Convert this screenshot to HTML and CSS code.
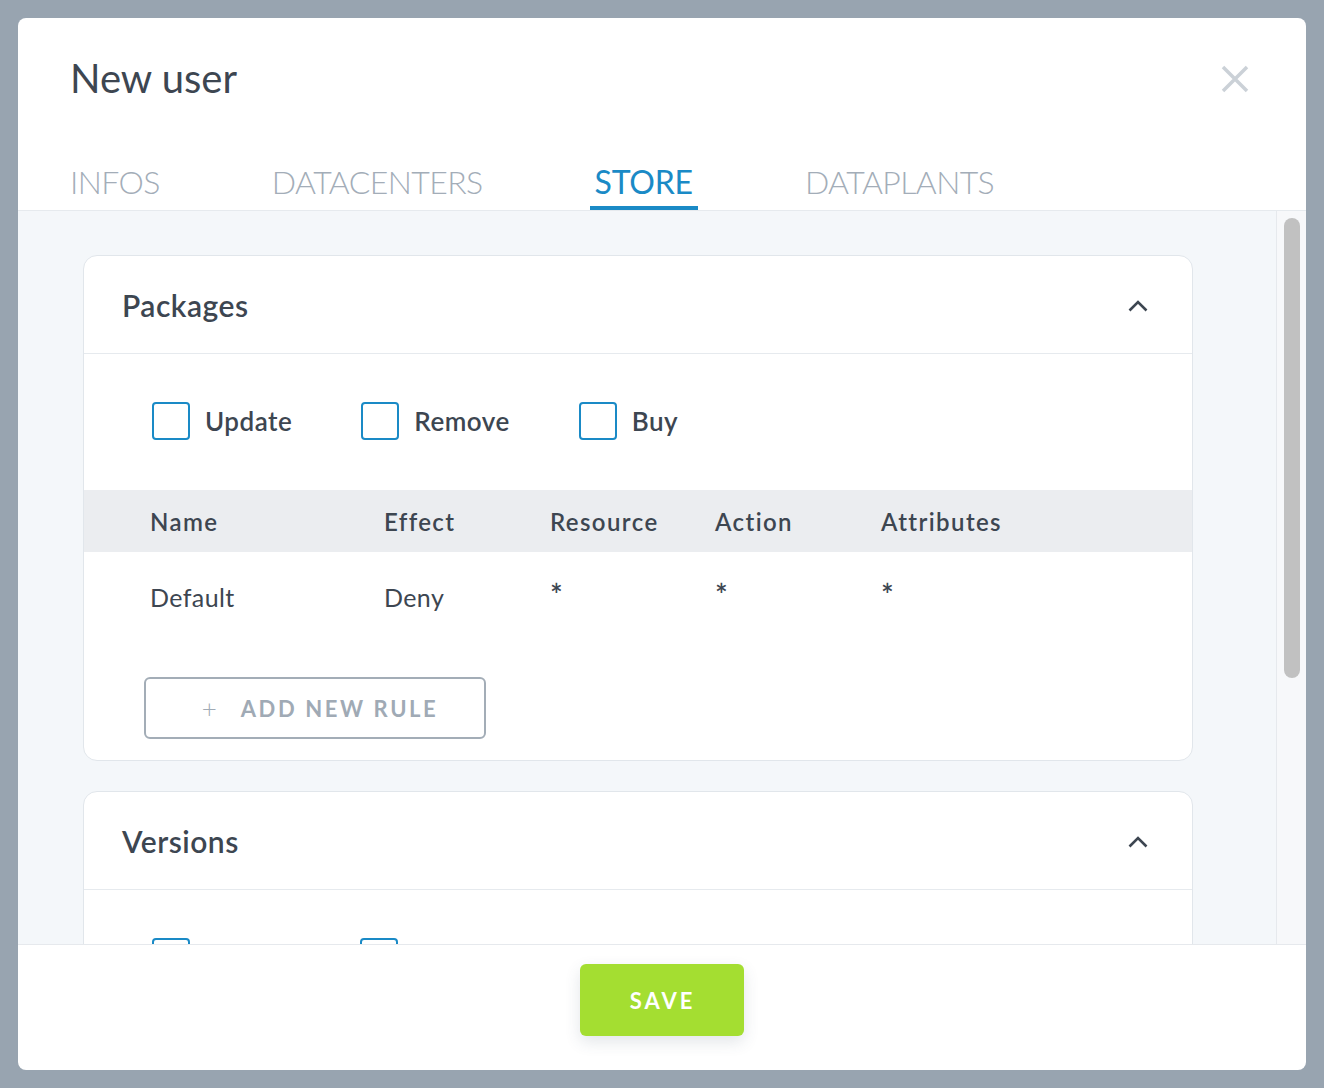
FILE: index.html
```html
<!DOCTYPE html>
<html lang="en">
<head>
<meta charset="utf-8">
<title>New user</title>
<link rel="stylesheet" href="styles.css">
</head>
<body>
<div class="overlay">
  <div class="modal">
    <div class="head">
      <div class="title-row">
        <h1 class="title">New user</h1>
        <button class="close" aria-label="Close">
          <svg width="28" height="28" viewBox="0 0 28 28"><path d="M2 2 L26 26 M26 2 L2 26" stroke="#cbd1d7" stroke-width="3.5" fill="none"/></svg>
        </button>
      </div>
      <nav class="tabs">
        <div class="tab">INFOS</div>
        <div class="tab">DATACENTERS</div>
        <div class="tab active">STORE</div>
        <div class="tab">DATAPLANTS</div>
      </nav>
    </div>
    <div class="body">
      <div class="scroll-area">
        <section class="card">
          <div class="card-head">
            <h2 class="card-title">Packages</h2>
            <svg class="chev" width="20" height="12" viewBox="0 0 20 12"><path d="M1.5 10.5 L10 2 L18.5 10.5" stroke="#3d4651" stroke-width="2.6" fill="none"/></svg>
          </div>
          <div class="checks">
            <label class="check"><span class="box"></span><span class="check-label">Update</span></label>
            <label class="check"><span class="box"></span><span class="check-label">Remove</span></label>
            <label class="check"><span class="box"></span><span class="check-label">Buy</span></label>
          </div>
          <div class="table">
            <div class="tr th">
              <div>Name</div><div>Effect</div><div>Resource</div><div>Action</div><div>Attributes</div>
            </div>
            <div class="tr td">
              <div>Default</div><div>Deny</div><div class="ast">*</div><div class="ast">*</div><div class="ast">*</div>
            </div>
          </div>
          <div class="add-wrap">
            <button class="add"><span class="plus">+</span><span>ADD NEW RULE</span></button>
          </div>
        </section>
        <section class="card card2">
          <div class="card-head">
            <h2 class="card-title">Versions</h2>
            <svg class="chev" width="20" height="12" viewBox="0 0 20 12"><path d="M1.5 10.5 L10 2 L18.5 10.5" stroke="#3d4651" stroke-width="2.6" fill="none"/></svg>
          </div>
          <div class="checks checks2">
            <span class="box"></span>
            <span class="box"></span>
          </div>
        </section>
      </div>
      <div class="scrollbar"><div class="thumb"></div></div>
    </div>
    <div class="foot">
      <button class="save">SAVE</button>
    </div>
  </div>
</div>
</body>
</html>
```
FILE: styles.css
```css
* { box-sizing: border-box; }
html, body { margin: 0; padding: 0; }
body {
  font-family: "Lato", "Source Sans Pro", "Noto Sans", sans-serif;
  color: #3d4651;
  background: #98a4b0;
}
.overlay {
  width: 1324px;
  height: 1088px;
  padding: 18px;
  background: #98a4b0;
}
.modal {
  width: 1288px;
  height: 1052px;
  background: #fff;
  border-radius: 8px;
  overflow: hidden;
  display: flex;
  flex-direction: column;
}
.head {
  height: 192px;
  flex: none;
  display: flex;
  flex-direction: column;
  padding-left: 47px;
}
.title-row {
  display: flex;
  justify-content: space-between;
  align-items: center;
  padding: 36px 57px 0 5px;
  height: 84px;
}
.title {
  margin: 0;
  font-size: 40px;
  line-height: 48px;
  font-weight: 400;
  color: #3d4651;
}
.close {
  background: none;
  border: 0;
  padding: 0;
  width: 28px;
  height: 28px;
  margin-top: 2px;
}
.close svg { display: block; }
.tabs {
  margin-top: auto;
  display: flex;
  gap: 102px;
}
.tab {
  font-size: 32px;
  font-weight: 300;
  line-height: 40px;
  letter-spacing: -0.6px;
  padding: 0 5px 4px;
  border-bottom: 4px solid transparent;
  color: #a3adb8;
}
.tab.active {
  color: #1a8ac6;
  font-weight: 400;
  letter-spacing: -0.2px;
  border-bottom-color: #1a8ac6;
}
.body {
  flex: 1;
  display: flex;
  border-top: 1px solid #e6eaee;
  min-height: 0;
  background: #f4f7fa;
}
.scroll-area {
  flex: 1;
  overflow: hidden;
  padding: 44px 83px 0 65px;
}
.scrollbar {
  width: 30px;
  flex: none;
  border-left: 1px solid #e6e9ed;
  background: #f7f8fa;
  padding: 7px 6px 0 7px;
}
.thumb {
  width: 16px;
  height: 460px;
  border-radius: 8px;
  background: #c1c1c1;
}
.card {
  background: #fff;
  border: 1px solid #e1e6eb;
  border-radius: 14px;
}
.card2 {
  margin-top: 30px;
  height: 300px;
}
.card-head {
  height: 98px;
  border-bottom: 1px solid #e6eaee;
  display: flex;
  align-items: center;
  justify-content: space-between;
  padding: 0 44px 0 38px;
}
.card-title {
  margin: 0;
  font-size: 30px;
  font-weight: 600;
  line-height: 36px;
  letter-spacing: 0.5px;
  color: #3d4651;
}
.chev { display: block; margin-top: 2px; }
.checks {
  display: flex;
  gap: 69px;
  padding: 48px 0 50px 68px;
}
.checks2 { gap: 170px; }
.check {
  display: flex;
  align-items: center;
}
.box {
  width: 38px;
  height: 38px;
  border: 2px solid #1a8ac6;
  border-radius: 4px;
}
.check-label {
  margin-left: 15px;
  font-size: 26px;
  font-weight: 600;
  letter-spacing: 0.5px;
  color: #3d4651;
}
.tr {
  display: grid;
  grid-template-columns: 234px 166px 165px 166px 1fr;
  padding-left: 66px;
}
.th {
  height: 62px;
  align-items: center;
  background: #ebedf0;
  font-size: 24px;
  font-weight: 600;
  letter-spacing: 1.4px;
}
.td {
  height: 90px;
  padding-top: 30px;
  font-size: 25px;
  line-height: 30px;
  font-weight: 400;
  letter-spacing: 0.4px;
}
.ast { font-size: 30px; line-height: 24px; font-weight: 600; }
.add-wrap {
  padding: 35px 0 21px 60px;
}
.add {
  width: 342px;
  height: 62px;
  border: 2px solid #a3adb7;
  border-radius: 6px;
  background: #fff;
  color: #a0aab5;
  font-family: inherit;
  font-size: 22px;
  font-weight: 700;
  letter-spacing: 2.6px;
  display: flex;
  align-items: center;
  justify-content: center;
  gap: 24px;
  padding: 0 0 0 10px;
}
.plus {
  font-weight: 300;
  font-size: 26px;
  letter-spacing: 0;
}
.foot {
  height: 126px;
  flex: none;
  border-top: 1px solid #e6e9ed;
  display: flex;
  justify-content: center;
  padding-top: 19px;
}
.save {
  width: 164px;
  height: 72px;
  border: 0;
  border-radius: 6px;
  background: #a4de31;
  color: #fff;
  font-family: inherit;
  font-size: 22px;
  font-weight: 700;
  letter-spacing: 3px;
  box-shadow: 0 6px 16px rgba(60, 80, 100, 0.14);
  padding-left: 7px;
}
```
